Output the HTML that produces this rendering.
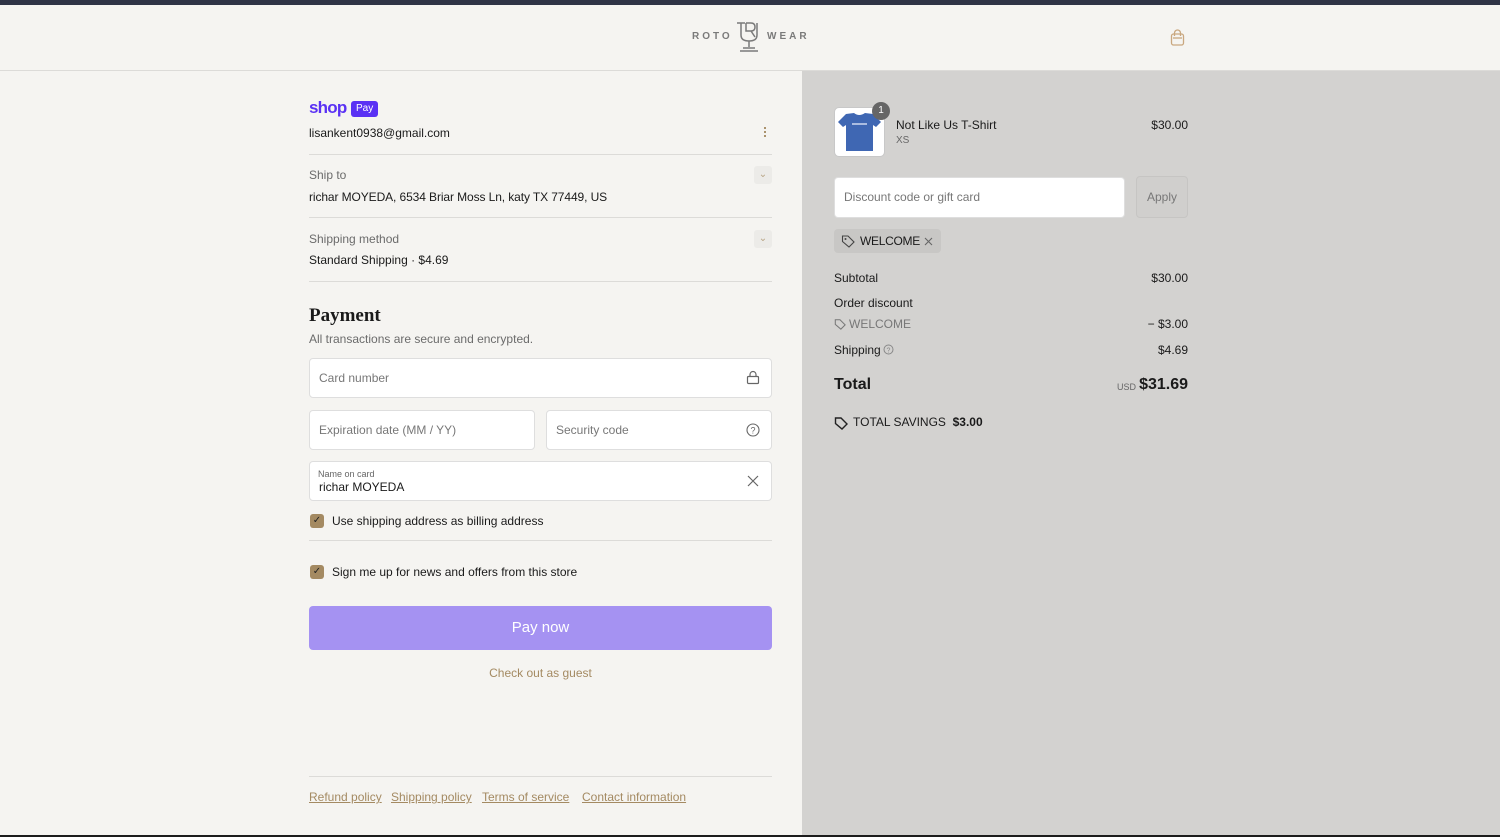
<!DOCTYPE html>
<html><head><style>
*{box-sizing:border-box;margin:0;padding:0}
body{width:1500px;height:837px;overflow:hidden;background:#f5f4f1;font-family:"Liberation Sans",sans-serif;color:#1a1a1a;position:relative;font-size:12px}
.a{position:absolute}
.r{position:absolute;right:312px;text-align:right}
.topbar{left:0;top:0;width:1500px;height:5px;background:#2f3446}
.header{left:0;top:5px;width:1500px;height:66px;border-bottom:1px solid #dcdbd8;background:#f5f4f1}
.right{left:802px;top:71px;width:698px;height:766px;background:#d3d2d0}
.hr{height:1px;background:#dcdbd8;width:463px;left:309px}
.lbl{color:#6b6b6b}
.inp{background:#fff;border:1px solid #dedede;border-radius:4px;height:40px}
.ph{color:#777;font-size:12px}
.cb{width:14px;height:14px;background:#a48a62;border-radius:3px;color:#222;font-size:10px;text-align:center;line-height:14px}
.link{color:#a48a62;text-decoration:underline;font-size:12px}
.chev{width:18px;height:18px;background:#ecebe8;border-radius:3px;color:#b9a585;font-size:10px;text-align:center;line-height:18px}
</style></head><body>
<div class="a topbar"></div>
<div class="a header"></div>
<div class="a" style="left:692px;top:31px;font-size:10px;letter-spacing:3px;color:#7a7a7a;font-weight:bold">ROTO</div>
<svg class="a" style="left:735px;top:20px" width="28" height="34" viewBox="0 0 28 34"><g fill="none" stroke="#7a7a7a" stroke-width="1.5"><path d="M2 3h8M6 3v12q0 6 8 6q8 0 8-6V3M11 3h5q4 0 4 4t-4 4h-5V3M16 11l4 6M14 21v6M8 28h12"/></g><path d="M5 31h18" stroke="#7a7a7a" stroke-width="1.5"/></svg>
<div class="a" style="left:767px;top:31px;font-size:10px;letter-spacing:3px;color:#7a7a7a;font-weight:bold">WEAR</div>
<svg class="a" style="left:1170px;top:29px" width="15" height="17" viewBox="0 0 15 17"><g fill="none" stroke="#c9a77f" stroke-width="1.3"><rect x="1.5" y="5" width="12" height="11" rx="2"/><path d="M4.5 7V4a3 3 0 0 1 6 0v3"/><path d="M3 9h9"/></g></svg>
<div class="a right"></div>

<div class="a" style="left:309px;top:98px;font-size:17px;font-weight:bold;color:#5a31f4;letter-spacing:-0.8px">shop</div>
<div class="a" style="left:351px;top:101px;background:#5a31f4;color:#fff;font-size:10px;border-radius:3px;padding:2px 5px;line-height:12px">Pay</div>
<div class="a" style="left:309px;top:126px;font-size:12px">lisankent0938@gmail.com</div>
<div class="a" style="left:764px;top:126px;width:2px;height:12px;background:radial-gradient(circle,#a48a62 1px,transparent 1.2px) 0 0/2px 4px"></div>
<div class="a hr" style="top:154px"></div>
<div class="a lbl" style="left:309px;top:168px">Ship to</div>
<div class="a chev" style="left:754px;top:166px">⌄</div>
<div class="a" style="left:309px;top:190px;letter-spacing:-0.1px">richar MOYEDA, 6534 Briar Moss Ln, katy TX 77449, US</div>
<div class="a hr" style="top:217px"></div>
<div class="a lbl" style="left:309px;top:232px">Shipping method</div>
<div class="a chev" style="left:754px;top:230px">⌄</div>
<div class="a" style="left:309px;top:253px">Standard Shipping · $4.69</div>
<div class="a hr" style="top:281px"></div>

<div class="a" style="left:309px;top:305px;font-family:'Liberation Serif',serif;font-weight:bold;font-size:19px">Payment</div>
<div class="a lbl" style="left:309px;top:332px">All transactions are secure and encrypted.</div>
<div class="a inp" style="left:309px;top:358px;width:463px"></div>
<div class="a ph" style="left:319px;top:371px">Card number</div>
<svg class="a" style="left:746px;top:370px" width="14" height="15" viewBox="0 0 14 15"><g fill="none" stroke="#666" stroke-width="1.2"><rect x="1.5" y="6.5" width="11" height="7" rx="1"/><path d="M4 6.5V4.5a3 3 0 0 1 6 0v2"/></g></svg>
<div class="a inp" style="left:309px;top:410px;width:226px"></div>
<div class="a ph" style="left:319px;top:423px">Expiration date (MM / YY)</div>
<div class="a inp" style="left:546px;top:410px;width:226px"></div>
<div class="a ph" style="left:556px;top:423px">Security code</div>
<svg class="a" style="left:746px;top:423px" width="14" height="14" viewBox="0 0 14 14"><circle cx="7" cy="7" r="6" fill="none" stroke="#666" stroke-width="1.1"/><text x="7" y="10.5" font-size="9" text-anchor="middle" fill="#666" font-family="Liberation Sans">?</text></svg>
<div class="a inp" style="left:309px;top:461px;width:463px"></div>
<div class="a" style="left:318px;top:469px;font-size:9px;color:#666">Name on card</div>
<div class="a" style="left:319px;top:480px">richar MOYEDA</div>
<svg class="a" style="left:747px;top:475px" width="12" height="12"><path d="M1 1l10 10M11 1L1 11" stroke="#666" stroke-width="1.2"/></svg>
<div class="a cb" style="left:310px;top:514px">✓</div>
<div class="a" style="left:332px;top:514px">Use shipping address as billing address</div>
<div class="a hr" style="top:540px"></div>
<div class="a cb" style="left:310px;top:565px">✓</div>
<div class="a" style="left:332px;top:565px">Sign me up for news and offers from this store</div>
<div class="a" style="left:309px;top:606px;width:463px;height:44px;background:#a592f2;border-radius:4px;color:#fff;font-size:15px;text-align:center;line-height:44px">Pay now</div>
<div class="a" style="left:309px;top:666px;width:463px;text-align:center;color:#a48a62">Check out as guest</div>
<div class="a hr" style="top:776px"></div>
<div class="a link" style="left:309px;top:790px">Refund policy</div>
<div class="a link" style="left:391px;top:790px">Shipping policy</div>
<div class="a link" style="left:482px;top:790px">Terms of service</div>
<div class="a link" style="left:582px;top:790px">Contact information</div>
<div class="a" style="left:0;top:835px;width:1500px;height:2px;background:#1c1c1c"></div>

<div class="a" style="left:834px;top:107px;width:51px;height:50px;background:#fff;border:1px solid #c8c8c8;border-radius:5px"></div>
<svg class="a" style="left:838px;top:112px" width="43" height="40" viewBox="0 0 43 40"><path d="M8 2l8-1q5 4 11 0l8 1 8 8-5 5-3-2v26H8V13l-3 2-5-5z" fill="#3f67b3"/><path d="M14 12h15" stroke="#cfd9ee" stroke-width="1.5"/></svg>
<div class="a" style="left:872px;top:102px;width:18px;height:18px;border-radius:9px;background:#666;color:#fff;font-size:10px;text-align:center;line-height:18px">1</div>
<div class="a" style="left:896px;top:118px">Not Like Us T-Shirt</div>
<div class="a" style="left:896px;top:135px;font-size:10px;color:#666">XS</div>
<div class="r" style="top:118px">$30.00</div>
<div class="a" style="left:834px;top:177px;width:291px;height:41px;background:#fff;border:1px solid #dedede;border-radius:4px"></div>
<div class="a ph" style="left:844px;top:190px">Discount code or gift card</div>
<div class="a" style="left:1136px;top:176px;width:52px;height:42px;background:#d0cfcd;border:1px solid #c6c5c3;border-radius:4px;color:#777;text-align:center;line-height:40px">Apply</div>
<div class="a" style="left:834px;top:229px;width:107px;height:24px;background:#c8c7c5;border-radius:4px"></div>
<svg class="a" style="left:841px;top:234px" width="14" height="14" viewBox="0 0 14 14"><path d="M1.5 7.5V2h5.5l6 6-5 5z" fill="none" stroke="#444" stroke-width="1.1"/><circle cx="4.5" cy="5" r="1" fill="#444"/></svg>
<div class="a" style="left:860px;top:234px;letter-spacing:-0.3px">WELCOME</div>
<svg class="a" style="left:924px;top:237px" width="9" height="9"><path d="M1 1l7 7M8 1L1 8" stroke="#666" stroke-width="1.1"/></svg>
<div class="a" style="left:834px;top:271px">Subtotal</div>
<div class="r" style="top:271px">$30.00</div>
<div class="a" style="left:834px;top:296px">Order discount</div>
<svg class="a" style="left:834px;top:318px" width="12" height="12" viewBox="0 0 14 14"><path d="M1.5 7.5V2h5.5l6 6-5 5z" fill="none" stroke="#777" stroke-width="1.2"/></svg>
<div class="a" style="left:849px;top:317px;color:#777">WELCOME</div>
<div class="r" style="top:317px">− $3.00</div>
<div class="a" style="left:834px;top:343px">Shipping</div>
<svg class="a" style="left:883px;top:344px" width="11" height="11"><circle cx="5.5" cy="5.5" r="4.5" fill="none" stroke="#888"/><text x="5.5" y="8.5" font-size="7" text-anchor="middle" fill="#888">?</text></svg>
<div class="r" style="top:343px">$4.69</div>
<div class="a" style="left:834px;top:376px;font-size:16px;font-weight:bold">Total</div>
<div class="a" style="left:1117px;top:382px;font-size:9px;color:#666">USD</div>
<div class="r" style="top:376px;font-size:16px;font-weight:bold">$31.69</div>
<svg class="a" style="left:834px;top:416px" width="14" height="14" viewBox="0 0 14 14"><path d="M1.5 7.5V2h5.5l6 6-5 5z" fill="none" stroke="#222" stroke-width="1.4"/></svg>
<div class="a" style="left:853px;top:415px">TOTAL SAVINGS&nbsp;&nbsp;<b>$3.00</b></div>
</body></html>
